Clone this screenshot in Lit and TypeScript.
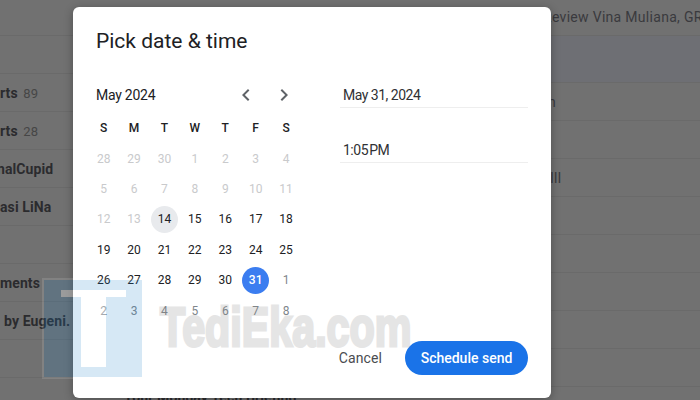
import { LitElement, css, html } from "lit";
import { customElement } from "lit/decorators.js";

type Day = { label: number; kind: string };

const days = (labels: number[], kind: string): Day[] =>
  labels.map((label) => ({ label, kind }));

const range = (from: number, to: number) =>
  Array.from({ length: to - from + 1 }, (_, i) => from + i);

const calendar: Day[] = [
  ...days([28, 29, 30], "off"),
  ...days(range(1, 13), "off"),
  { label: 14, kind: "today" },
  ...days(range(15, 30), ""),
  { label: 31, kind: "picked" },
  ...days(range(1, 8), "next"),
];

@customElement("app-root")
export class AppRoot extends LitElement {
  static styles = css`
    :host {
      display: block;
      position: relative;
      width: 700px;
      height: 400px;
      overflow: hidden;
      font-family: Roboto, "Liberation Sans", sans-serif;
      background: #717171;
    }

    .inbox {
      display: flex;
      height: 400px;
      overflow: hidden;
    }

    .col-left {
      width: 548px;
      margin-top: -2px;
      overflow: hidden;
    }

    .col-right {
      flex: 1;
      margin-top: -2px;
      overflow: hidden;
    }

    .row {
      box-sizing: border-box;
      height: 38px;
      line-height: 39px;
      border-bottom: 1px solid #6a6a6a;
      font-size: 14px;
      white-space: nowrap;
      color: #2b2b2e;
    }

    .sender {
      font-weight: 700;
      letter-spacing: 0.1px;
    }

    .count {
      font-weight: 400;
      font-size: 13px;
      color: #464646;
      margin-left: 2px;
    }

    .indent {
      padding-left: 4px;
    }

    .pull {
      text-indent: -3px;
    }

    .bottom {
      padding-left: 124px;
    }

    .band {
      height: 47px;
      background: #6e6f74;
      border-bottom: 1px solid #6a6a6a;
      box-sizing: border-box;
    }

    .subject {
      color: #3a3a3e;
      line-height: 38px;
    }

    .lead {
      letter-spacing: 0.3px;
      text-indent: -5px;
    }

    .nudge {
      padding-left: 2px;
    }

    .modal {
      position: absolute;
      left: 73px;
      top: 7px;
      box-sizing: border-box;
      width: 478px;
      height: 391px;
      padding: 20px 23px 23px;
      display: flex;
      flex-direction: column;
      background: #fff;
      border-radius: 6px;
      box-shadow: 0 2px 10px rgba(0, 0, 0, 0.3);
      color: #202124;
    }

    .title {
      font-size: 21px;
      line-height: 28px;
      margin-bottom: 23px;
    }

    .body {
      display: flex;
      justify-content: space-between;
    }

    .picker {
      width: 205px;
    }

    .head {
      display: flex;
      align-items: center;
      justify-content: space-between;
      height: 32px;
      font-size: 14px;
      letter-spacing: -0.25px;
    }

    .month {
      padding-top: 2px;
    }

    .nav {
      display: flex;
      gap: 14px;
      margin-right: 5px;
      margin-top: 2px;
    }

    .nav svg {
      display: block;
      width: 24px;
      height: 24px;
      fill: #5f6368;
    }

    .grid {
      display: grid;
      grid-template-columns: repeat(7, 30.4px);
      grid-auto-rows: 30.4px;
      margin: 3px 0 0 -7.5px;
      width: 212.8px;
      font-size: 12px;
    }

    .cell {
      display: flex;
      align-items: center;
      justify-content: center;
    }

    .dow {
      font-weight: 500;
    }

    .num {
      width: 27px;
      height: 27px;
      border-radius: 50%;
      display: flex;
      align-items: center;
      justify-content: center;
    }

    .off {
      color: #c9cacc;
    }

    .next {
      color: #80868b;
    }

    .today {
      background: #e8eaed;
    }

    .picked {
      background: #3b7df0;
      color: #fff;
      font-weight: 500;
    }

    .fields {
      width: 188px;
    }

    .field {
      padding: 7px 3px 2px;
      line-height: 20px;
      font-size: 14px;
      letter-spacing: -0.5px;
      color: #303134;
      border-bottom: 1px solid #eeeeee;
    }

    .field + .field {
      margin-top: 25px;
    }

    .actions {
      margin-top: auto;
      display: flex;
      justify-content: flex-end;
      align-items: center;
      gap: 23px;
      font-size: 14px;
      font-weight: 500;
    }

    .cancel {
      color: #4a4c50;
      font-weight: 400;
      letter-spacing: 0.1px;
    }

    .send {
      height: 34px;
      width: 123px;
      border-radius: 17px;
      display: flex;
      align-items: center;
      justify-content: center;
      background: #1a73e8;
      color: #fff;
    }

    .mark {
      position: absolute;
      left: 42px;
      top: 278px;
      width: 102px;
      height: 102px;
      pointer-events: none;
    }

    .brand {
      position: absolute;
      left: 160px;
      top: 295px;
      font-family: "Liberation Sans", Arial, sans-serif;
      font-size: 55px;
      line-height: 64px;
      font-weight: 700;
      white-space: nowrap;
      color: #808080;
      -webkit-text-stroke: 3px #808080;
      opacity: 0.2;
      transform: scaleX(0.75);
      transform-origin: left top;
      pointer-events: none;
    }
  `;

  render() {
    return html`
      <div class="inbox">
        <div class="col-left">
          <div class="row"></div>
          <div class="row"></div>
          <div class="row sender">rts <span class="count">89</span></div>
          <div class="row sender">rts <span class="count">28</span></div>
          <div class="row sender pull">nalCupid</div>
          <div class="row sender">asi LiNa</div>
          <div class="row"></div>
          <div class="row sender">ments</div>
          <div class="row sender indent">by Eugeni.</div>
          <div class="row"></div>
          <div class="row sender bottom">Your Monday Tech Briefing</div>
        </div>
        <div class="col-right">
          <div class="row subject lead">Review Vina Muliana, GRATIS</div>
          <div class="band"></div>
          <div class="row subject">n</div>
          <div class="row"></div>
          <div class="row subject nudge">III</div>
          <div class="row"></div>
          <div class="row"></div>
          <div class="row"></div>
          <div class="row"></div>
          <div class="row"></div>
        </div>
      </div>

      <div class="modal">
        <div class="title">Pick date &amp; time</div>
        <div class="body">
          <div class="picker">
            <div class="head">
              <span class="month">May 2024</span>
              <div class="nav">
                <svg viewBox="0 0 24 24"><path d="M15.41 7.41 14 6l-6 6 6 6 1.41-1.41L10.83 12z" /></svg>
                <svg viewBox="0 0 24 24"><path d="M8.59 16.59 10 18l6-6-6-6-1.41 1.41L13.17 12z" /></svg>
              </div>
            </div>
            <div class="grid">
              ${["S", "M", "T", "W", "T", "F", "S"].map(
                (d) => html`<div class="cell dow">${d}</div>`
              )}
              ${calendar.map(
                (d) => html`<div class="cell"><span class="num ${d.kind}">${d.label}</span></div>`
              )}
            </div>
          </div>
          <div class="fields">
            <div class="field">May 31, 2024</div>
            <div class="field">1:05\u202fPM</div>
          </div>
        </div>
        <div class="actions">
          <span class="cancel">Cancel</span>
          <span class="send">Schedule send</span>
        </div>
      </div>

      <svg class="mark" viewBox="0 0 102 102">
        <rect x="1" y="1" width="100" height="99" fill="none" stroke="rgba(255,255,255,0.12)" stroke-width="2" />
        <path
          fill="rgba(30,130,200,0.18)"
          fill-rule="evenodd"
          d="M2 2H100V99H2ZM19 12V19H39V89H64V19H84V12Z"
        />
        <path fill="rgba(255,255,255,0.3)" d="M19 12V19H39V89H64V19H84V12Z" />
      </svg>
      <div class="brand">TediEka.com</div>
    `;
  }
}
